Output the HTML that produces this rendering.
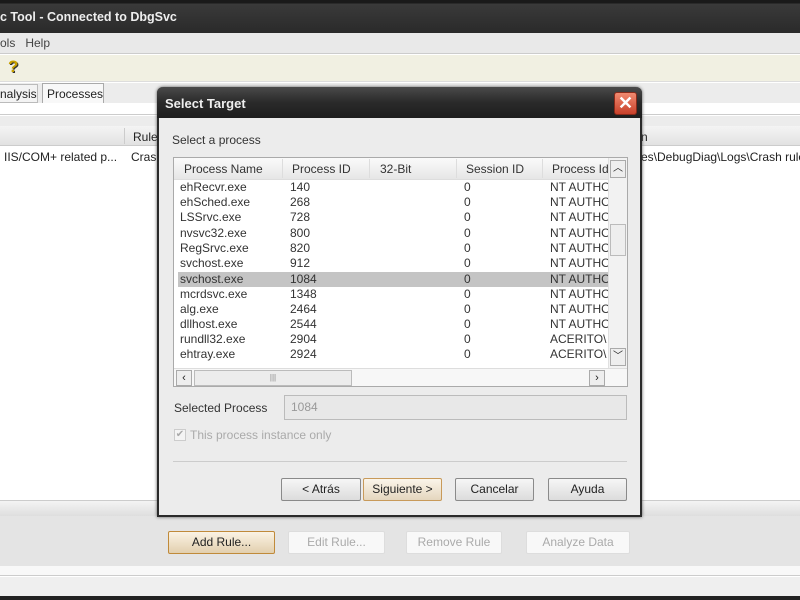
<!DOCTYPE html>
<html><head><meta charset="utf-8"><style>
*{margin:0;padding:0;box-sizing:border-box}
body{width:800px;height:600px;overflow:hidden;position:relative;background:#fff;font-family:"Liberation Sans",Tahoma,sans-serif;font-size:12px;color:#222;white-space:nowrap}
.a{position:absolute}
.btn{position:absolute;border:1px solid #8a8a8a;border-radius:2px;background:linear-gradient(#f6f6f6,#dcdcdc);text-align:center;font-size:12px;line-height:20px;color:#222}
.dis{background:#f8f8f8;border-color:#ddd;color:#aaa}
.row{position:absolute;left:6px;width:430px;height:15px;line-height:15px;font-size:12px;color:#333}
.row span{position:absolute;white-space:nowrap}
</style></head><body>
<!-- title bar -->
<div class="a" style="left:0;top:0;width:800px;height:33px;background:linear-gradient(#1a1a1a 0,#1a1a1a 3px,#3a3a3a 4px,#2a2a2a 33px)"></div>
<div class="a" style="left:0;top:10px;color:#eee;font-size:12.5px;font-weight:bold">c Tool - Connected to DbgSvc</div>
<!-- menu -->
<div class="a" style="left:0;top:33px;width:800px;height:21px;background:#e9e9e9;border-bottom:1px solid #ccc"></div>
<div class="a" style="left:0;top:36px;color:#444">ols&nbsp;&nbsp;&nbsp;Help</div>
<!-- toolbar -->
<div class="a" style="left:0;top:55px;width:800px;height:27px;background:#f1f0e2;border-bottom:1px solid #ddd"></div>
<div class="a" style="left:8px;top:57px;font-size:17px;font-weight:bold;color:#c8a000;text-shadow:1px 1px 0 #333">?</div>
<!-- tabs -->
<div class="a" style="left:0;top:83px;width:800px;height:21px;background:#ececec"></div>
<div class="a" style="left:0;top:84px;width:38px;height:19px;border:1px solid #bbb;border-left:none;background:#f3f3f3;padding-top:2px">nalysis</div>
<div class="a" style="left:42px;top:83px;width:62px;height:20px;border:1px solid #aaa;border-bottom:none;background:#f8f8f8;padding:3px 0 0 4px">Processes</div>
<div class="a" style="left:0;top:103px;width:800px;height:12px;background:#fff;border-bottom:1px solid #ccc"></div>
<div class="a" style="left:0;top:116px;width:800px;height:10px;background:#ececec"></div>
<!-- list header -->
<div class="a" style="left:0;top:126px;width:800px;height:20px;background:linear-gradient(#f4f4f4,#e2e2e2);border-bottom:1px solid #ccc"></div>
<div class="a" style="left:124px;top:128px;width:1px;height:16px;background:#ccc"></div>
<div class="a" style="left:133px;top:130px">Rule</div>
<div class="a" style="left:641px;top:130px">n</div>
<div class="a" style="left:4px;top:150px">IIS/COM+ related p...</div>
<div class="a" style="left:131px;top:150px">Crash</div>
<div class="a" style="left:641px;top:150px">es\DebugDiag\Logs\Crash rule</div>
<!-- bottom -->
<div class="a" style="left:0;top:500px;width:800px;height:16px;background:linear-gradient(#f4f4f4,#dedede);border-top:1px solid #ccc"></div>
<div class="a" style="left:0;top:516px;width:800px;height:50px;background:#e4e4e4"></div>
<div class="a" style="left:0;top:566px;width:800px;height:10px;background:#f8f8f8;border-bottom:1px solid #ccc"></div>
<div class="a" style="left:0;top:577px;width:800px;height:19px;background:#efefef"></div>
<div class="a" style="left:0;top:596px;width:800px;height:4px;background:#222"></div>
<div class="btn" style="left:168px;top:531px;width:107px;height:23px;border-color:#c08a3a;background:linear-gradient(#fbf3e4,#e2cfae)">Add Rule...</div>
<div class="btn dis" style="left:288px;top:531px;width:97px;height:23px">Edit Rule...</div>
<div class="btn dis" style="left:406px;top:531px;width:96px;height:23px">Remove Rule</div>
<div class="btn dis" style="left:526px;top:531px;width:104px;height:23px">Analyze Data</div>
<!-- dialog -->
<div class="a" style="left:157px;top:87px;width:485px;height:430px;background:#ececec;border:2px solid #2a2a2a;border-top:none;border-radius:6px 6px 0 0;box-shadow:0 0 3px #555"></div>
<div class="a" style="left:157px;top:87px;width:485px;height:31px;background:linear-gradient(#4a4a4a,#2a2a2a 50%,#1e1e1e);border-radius:6px 6px 0 0"></div>
<div class="a" style="left:165px;top:96px;color:#eee;font-size:13px;font-weight:bold">Select Target</div>
<div class="a" style="left:614px;top:92px;width:23px;height:23px;border-radius:3px;background:linear-gradient(#f08a70,#c8402a);border:1px solid #8a2a1a;color:#fff;font-size:18px;line-height:20px;text-align:center;font-weight:bold">✕</div>
<div class="a" style="left:172px;top:133px;color:#333">Select a process</div>
<!-- listbox -->
<div class="a" style="left:173px;top:157px;width:455px;height:230px;background:#fff;border:1px solid #aaa;overflow:hidden">
 <div class="a" style="left:0;top:0;width:435px;height:22px;background:linear-gradient(#fafafa,#e6e6e6);border-bottom:1px solid #ddd;color:#333">
  <span class="a" style="left:10px;top:4px">Process Name</span>
  <span class="a" style="left:108px;top:1px;width:1px;height:19px;background:#ddd"></span>
  <span class="a" style="left:118px;top:4px">Process ID</span>
  <span class="a" style="left:195px;top:1px;width:1px;height:19px;background:#ddd"></span>
  <span class="a" style="left:206px;top:4px">32-Bit</span>
  <span class="a" style="left:282px;top:1px;width:1px;height:19px;background:#ddd"></span>
  <span class="a" style="left:292px;top:4px">Session ID</span>
  <span class="a" style="left:368px;top:1px;width:1px;height:19px;background:#ddd"></span>
  <span class="a" style="left:378px;top:4px">Process Id</span>
 </div>
 <div class="a" style="left:4px;top:114px;width:430px;height:15px;background:#c4c4c4"></div>
 <div class="row" style="top:22px"><span>ehRecvr.exe</span><span style="left:110px">140</span><span style="left:284px">0</span><span style="left:370px">NT AUTHO</span></div>
 <div class="row" style="top:37px"><span>ehSched.exe</span><span style="left:110px">268</span><span style="left:284px">0</span><span style="left:370px">NT AUTHO</span></div>
 <div class="row" style="top:52px"><span>LSSrvc.exe</span><span style="left:110px">728</span><span style="left:284px">0</span><span style="left:370px">NT AUTHO</span></div>
 <div class="row" style="top:68px"><span>nvsvc32.exe</span><span style="left:110px">800</span><span style="left:284px">0</span><span style="left:370px">NT AUTHO</span></div>
 <div class="row" style="top:83px"><span>RegSrvc.exe</span><span style="left:110px">820</span><span style="left:284px">0</span><span style="left:370px">NT AUTHO</span></div>
 <div class="row" style="top:98px"><span>svchost.exe</span><span style="left:110px">912</span><span style="left:284px">0</span><span style="left:370px">NT AUTHO</span></div>
 <div class="row" style="top:114px"><span>svchost.exe</span><span style="left:110px">1084</span><span style="left:284px">0</span><span style="left:370px">NT AUTHO</span></div>
 <div class="row" style="top:129px"><span>mcrdsvc.exe</span><span style="left:110px">1348</span><span style="left:284px">0</span><span style="left:370px">NT AUTHO</span></div>
 <div class="row" style="top:144px"><span>alg.exe</span><span style="left:110px">2464</span><span style="left:284px">0</span><span style="left:370px">NT AUTHO</span></div>
 <div class="row" style="top:159px"><span>dllhost.exe</span><span style="left:110px">2544</span><span style="left:284px">0</span><span style="left:370px">NT AUTHO</span></div>
 <div class="row" style="top:174px"><span>rundll32.exe</span><span style="left:110px">2904</span><span style="left:284px">0</span><span style="left:370px">ACERITO\</span></div>
 <div class="row" style="top:189px"><span>ehtray.exe</span><span style="left:110px">2924</span><span style="left:284px">0</span><span style="left:370px">ACERITO\</span></div>
 <!-- vscroll -->
 <div class="a" style="left:434px;top:0;width:19px;height:210px;background:#f2f2f2;border-left:1px solid #e0e0e0"></div>
 <div class="a" style="left:436px;top:2px;width:16px;height:18px;border:1px solid #aaa;background:#eee;font-size:10px;text-align:center;line-height:16px">︿</div>
 <div class="a" style="left:436px;top:66px;width:16px;height:32px;border:1px solid #bbb;background:#eee"></div>
 <div class="a" style="left:436px;top:190px;width:16px;height:18px;border:1px solid #aaa;background:#eee;font-size:10px;text-align:center;line-height:16px">﹀</div>
 <!-- hscroll -->
 <div class="a" style="left:0;top:210px;width:453px;height:19px;background:#f7f7f7;border-top:1px solid #ddd"></div>
 <div class="a" style="left:2px;top:212px;width:16px;height:16px;border:1px solid #aaa;background:#eee;font-size:11px;text-align:center;line-height:14px">‹</div>
 <div class="a" style="left:20px;top:212px;width:158px;height:16px;border:1px solid #bbb;background:#ececec;font-size:8px;text-align:center;line-height:14px;color:#888">|||</div>
 <div class="a" style="left:415px;top:212px;width:16px;height:16px;border:1px solid #aaa;background:#eee;font-size:11px;text-align:center;line-height:14px">›</div>
</div>
<div class="a" style="left:174px;top:401px;color:#333">Selected Process</div>
<div class="a" style="left:284px;top:395px;width:343px;height:25px;border:1px solid #bbb;background:#e8e8e8;color:#999;padding:4px 0 0 6px">1084</div>
<div class="a" style="left:174px;top:429px;width:12px;height:12px;border:1px solid #ccc;background:#f4f4f4;font-size:10px;line-height:10px;color:#aaa;text-align:center">✔</div>
<div class="a" style="left:190px;top:428px;color:#aaa">This process instance only</div>
<div class="a" style="left:173px;top:461px;width:454px;height:1px;background:#ccc"></div>
<div class="btn" style="left:281px;top:478px;width:80px;height:23px">&lt; Atrás</div>
<div class="btn" style="left:363px;top:478px;width:79px;height:23px;border-color:#c89a5a;background:linear-gradient(#fbf5ea,#e4d6be)">Siguiente &gt;</div>
<div class="btn" style="left:455px;top:478px;width:79px;height:23px">Cancelar</div>
<div class="btn" style="left:548px;top:478px;width:79px;height:23px">Ayuda</div>
</body></html>
